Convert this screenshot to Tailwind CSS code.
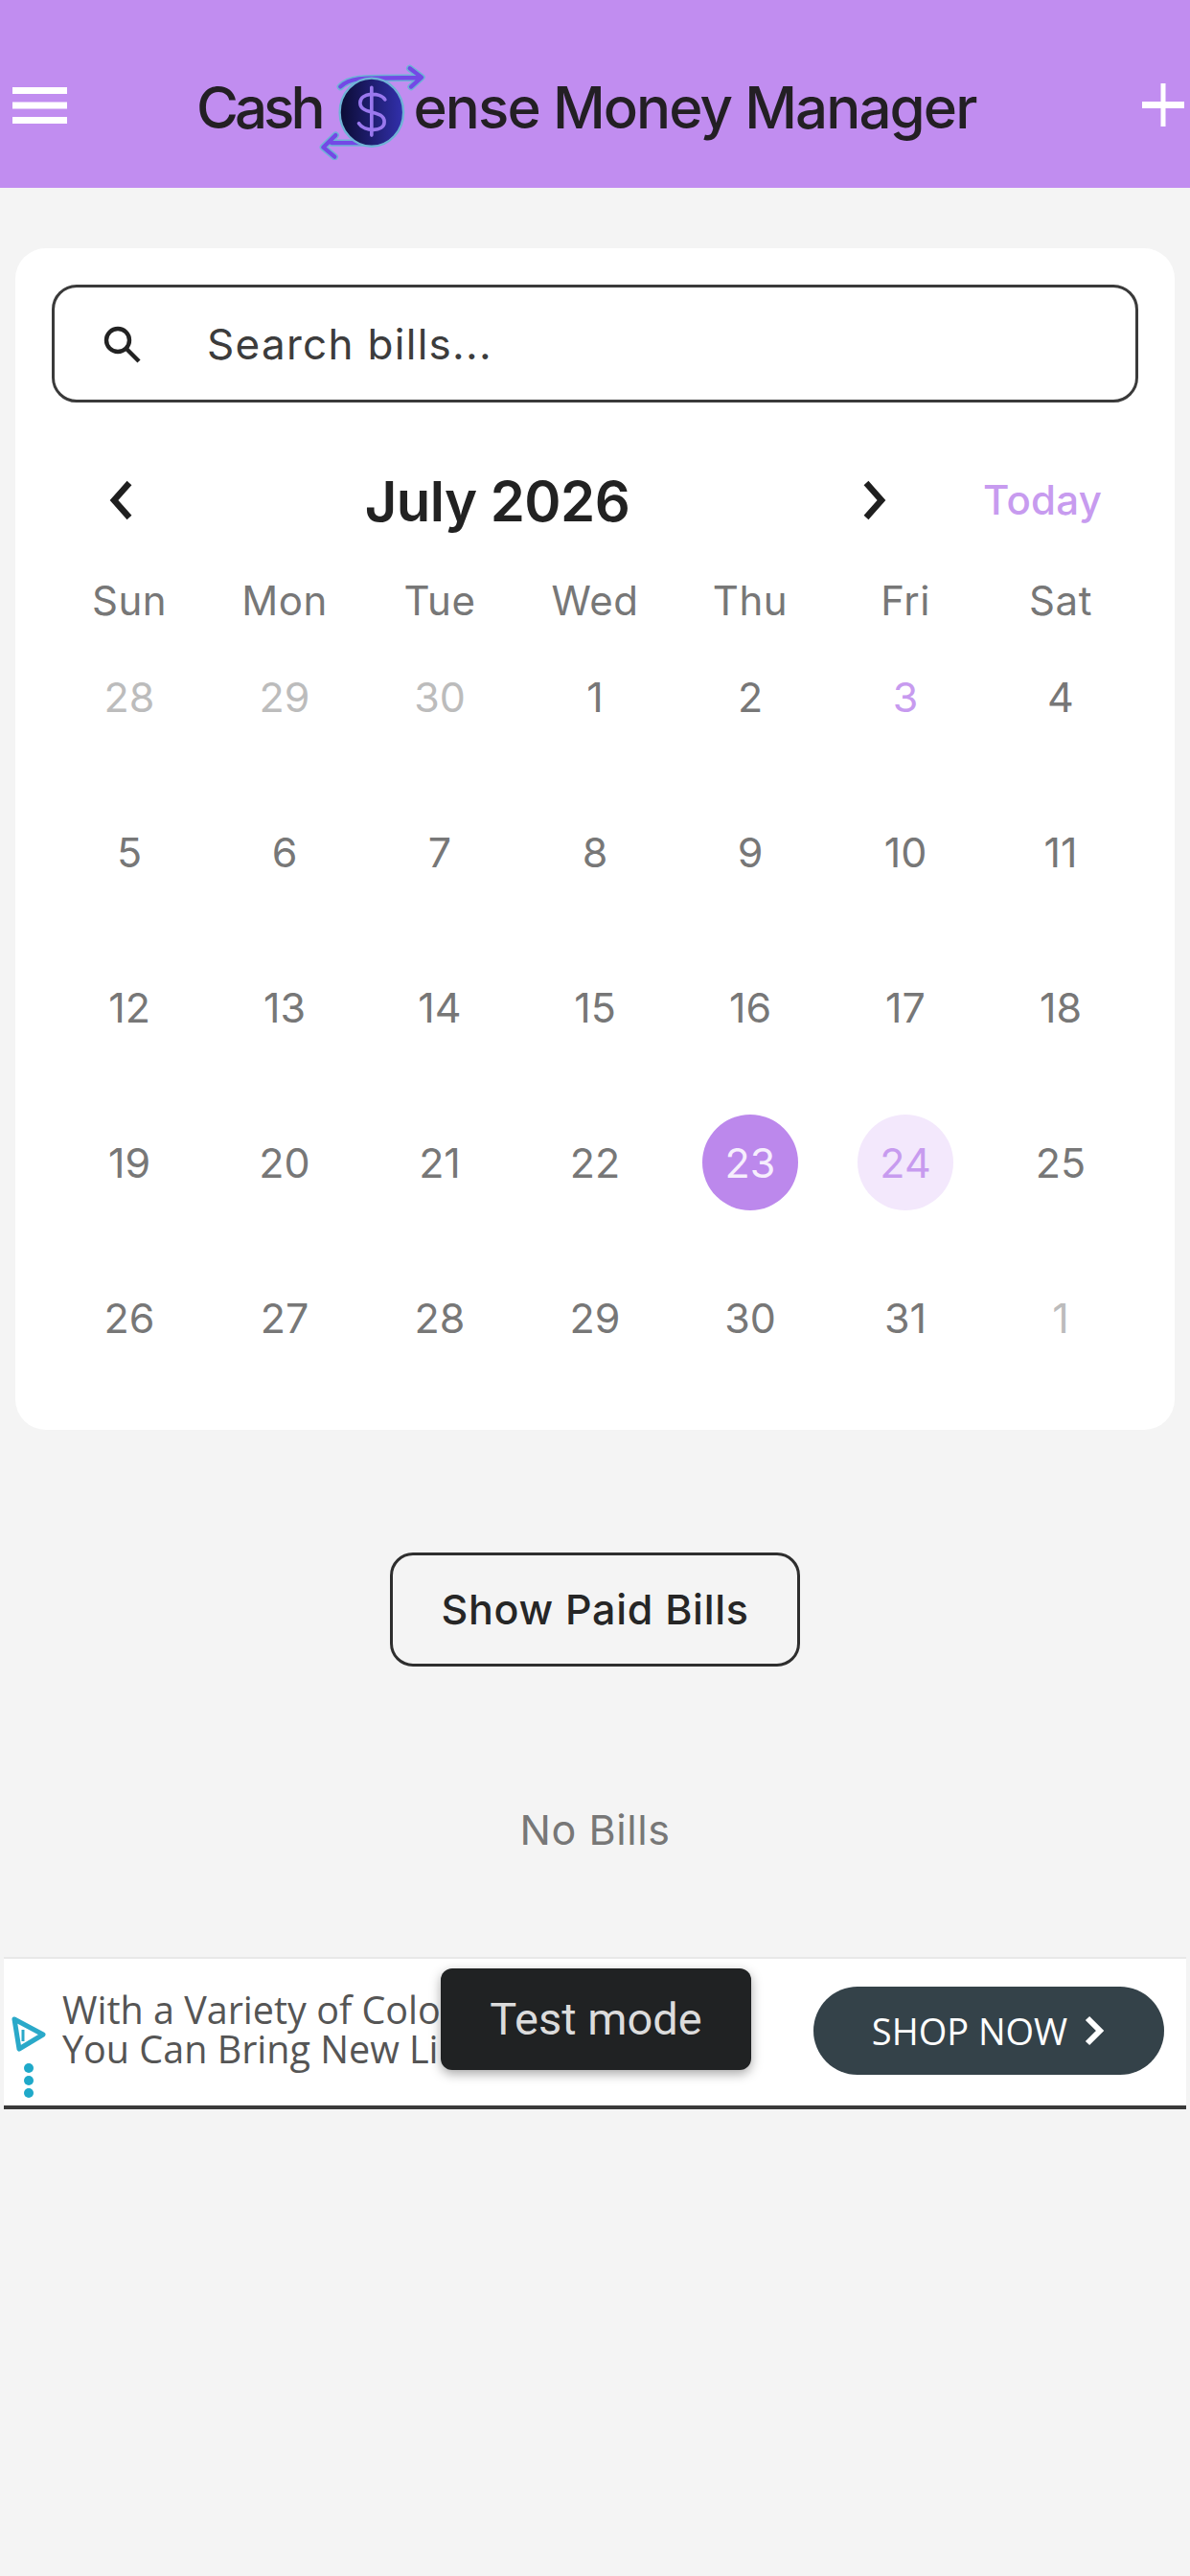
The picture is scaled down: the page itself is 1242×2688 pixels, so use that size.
<!DOCTYPE html>
<html>
<head>
<meta charset="utf-8">
<script src="https://cdn.jsdelivr.net/npm/@tailwindcss/browser@4"></script>
</head>
<body class="bg-[#f4f4f4] font-['Inter','Liberation_Sans',sans-serif]">
<div class="w-[1242px] h-[2688px] overflow-hidden flex flex-col">
  <header class="h-[196px] shrink-0 bg-[#c18df0] relative flex items-center justify-center pt-[16px]">
    <svg class="absolute left-[13px] top-[91px]" width="57" height="38" viewBox="0 0 57 38"><g fill="#fff"><rect x="0" y="0" width="57" height="7"/><rect x="0" y="15.5" width="57" height="7"/><rect x="0" y="31" width="57" height="7"/></g></svg>
    <div class="absolute left-[205px] top-[74px] flex items-center h-[76px] text-[60px] leading-[76px] font-medium text-[#231f24] tracking-[-1.9px] whitespace-nowrap">
      <span class="tracking-[-4px]">Cash</span>
      <svg class="shrink-0 ml-[-3px] mr-[-14px] translate-y-[3px]" width="113" height="103" viewBox="90 70 340 310">
        <defs><linearGradient id="g" x1="0" x2="1"><stop offset="0" stop-color="#0b0b33"/><stop offset="1" stop-color="#3230ad"/></linearGradient></defs>
        <g fill="none" stroke-linecap="round" stroke-linejoin="round">
          <path d="M160 150 C190 120 220 122 400 122 M378 92 L415 120 L382 150" stroke="#6fb2d6" stroke-width="22"/>
          <path d="M132 326 L250 326 M145 302 L106 340 L142 370" stroke="#6fb2d6" stroke-width="22"/>
          <path d="M160 150 C190 120 220 122 400 122 M378 92 L415 120 L382 150" stroke="#7448e6" stroke-width="13"/>
          <path d="M132 326 L250 326 M145 302 L106 340 L142 370" stroke="#7448e6" stroke-width="13"/>
        </g>
        <ellipse cx="258" cy="230" rx="100" ry="107" fill="url(#g)" stroke="#6fb2d6" stroke-width="7"/>
        <path d="M300 190 C285 165 222 168 222 200 C222 240 298 220 298 260 C298 292 235 292 218 265 M258 152 L258 302" stroke="#9a78ee" stroke-width="11" fill="none" stroke-linecap="round"/>
      </svg>
      <span>ense Money Manager</span>
    </div>
    <svg class="absolute left-[1192px] top-[87px]" width="44" height="45" viewBox="0 0 44 45"><g fill="#fff"><rect x="0" y="19" width="44" height="7"/><rect x="19.5" y="0" width="5" height="45"/></g></svg>
  </header>

  <section class="mt-[63px] mx-[16px] w-[1210px] h-[1233px] bg-white rounded-[32px] px-[38px] pt-[38px]">
    <div class="h-[123px] border-[3px] border-[#3a3a3a] rounded-[26px] flex items-center pl-[46px]">
      <svg width="48" height="48" viewBox="0 0 24 24" fill="none" stroke="#222" stroke-width="2.2"><circle cx="10" cy="10" r="6"/><path d="M14.5 14.5 L21 21"/></svg>
      <span class="ml-[65px] text-[44px] tracking-[1.3px] text-[#3c3c3c]">Search bills...</span>
    </div>

    <div class="relative h-[120px] mt-[66px] flex items-center">
      <svg class="absolute left-[58px] top-[15px]" width="30" height="42" viewBox="0 0 30 42" fill="none" stroke="#1f1f1f" stroke-width="6.5"><path d="M23 3 L7 21 L23 39"/></svg>
      <div class="absolute left-[195px] w-[540px] top-[0px] text-center text-[58px] leading-[74px] font-semibold tracking-[-0.5px] text-[#222]">July 2026</div>
      <svg class="absolute left-[843px] top-[15px]" width="30" height="42" viewBox="0 0 30 42" fill="none" stroke="#1f1f1f" stroke-width="6.5"><path d="M7 3 L23 21 L7 39"/></svg>
      <span class="absolute left-[972px] top-[11px] text-[42px] tracking-[0.3px] leading-[50px] font-medium text-[#c79bef]">Today</span>
    </div>

    <div class="grid grid-cols-7 w-[1134px] -mt-[9px] text-[42px] text-[#777] text-center tracking-[0.5px]">
      <div class="h-[60px] leading-[60px]">Sun</div><div class="h-[60px] leading-[60px]">Mon</div><div class="h-[60px] leading-[60px]">Tue</div><div class="h-[60px] leading-[60px]">Wed</div><div class="h-[60px] leading-[60px]">Thu</div><div class="h-[60px] leading-[60px]">Fri</div><div class="h-[60px] leading-[60px]">Sat</div>
    </div>

    <div class="grid grid-cols-7 auto-rows-[162px] w-[1134px] -mt-[11px] text-[43px] text-[#777]">
      <div class="flex items-center justify-center text-[#bcbcbc]">28</div><div class="flex items-center justify-center text-[#bcbcbc]">29</div><div class="flex items-center justify-center text-[#bcbcbc]">30</div><div class="flex items-center justify-center">1</div><div class="flex items-center justify-center">2</div><div class="flex items-center justify-center text-[#c79bef]">3</div><div class="flex items-center justify-center">4</div>
      <div class="flex items-center justify-center">5</div><div class="flex items-center justify-center">6</div><div class="flex items-center justify-center">7</div><div class="flex items-center justify-center">8</div><div class="flex items-center justify-center">9</div><div class="flex items-center justify-center">10</div><div class="flex items-center justify-center">11</div>
      <div class="flex items-center justify-center">12</div><div class="flex items-center justify-center">13</div><div class="flex items-center justify-center">14</div><div class="flex items-center justify-center">15</div><div class="flex items-center justify-center">16</div><div class="flex items-center justify-center">17</div><div class="flex items-center justify-center">18</div>
      <div class="flex items-center justify-center">19</div><div class="flex items-center justify-center">20</div><div class="flex items-center justify-center">21</div><div class="flex items-center justify-center">22</div>
      <div class="flex items-center justify-center"><span class="w-[100px] h-[100px] rounded-full bg-[#bc88ec] text-[#f6eefd] flex items-center justify-center">23</span></div>
      <div class="flex items-center justify-center"><span class="w-[100px] h-[100px] rounded-full bg-[#f3e8fc] text-[#c79bef] flex items-center justify-center">24</span></div>
      <div class="flex items-center justify-center">25</div>
      <div class="flex items-center justify-center">26</div><div class="flex items-center justify-center">27</div><div class="flex items-center justify-center">28</div><div class="flex items-center justify-center">29</div><div class="flex items-center justify-center">30</div><div class="flex items-center justify-center">31</div><div class="flex items-center justify-center text-[#bcbcbc]">1</div>
    </div>
  </section>

  <div class="mt-[128px] flex justify-center">
    <div class="w-[428px] h-[119px] border-[3px] border-[#2e2e2e] rounded-[24px] flex items-center justify-center text-[43px] font-medium tracking-[0.7px] text-[#262626]">Show Paid Bills</div>
  </div>

  <div class="mt-[140px] h-[60px] leading-[60px] text-center text-[43px] tracking-[0.6px] text-[#777]">No Bills</div>

  <div class="relative mt-[103px] mx-[4px] w-[1234px] h-[159px] bg-white border-t-[2px] border-[#e8e8e8] border-b-[4px] border-b-[#3a3a3a] flex items-center font-['Open_Sans','Noto_Sans',sans-serif]">
    <div class="w-[61px] shrink-0 pl-[7px] flex flex-col items-start gap-[11px] pt-[52px]">
      <svg width="38" height="38" viewBox="0 0 38 38" fill="none" stroke="#2aa9c9" stroke-width="5" stroke-linejoin="round"><path d="M4 3 L34 19 L9 34 Z"/><path d="M13 14 L13 26" stroke-width="3"/></svg>
      <div class="flex flex-col gap-[3px] ml-[14px]"><span class="block w-[10px] h-[10px] rounded-full bg-[#1fa9c9]"></span><span class="block w-[10px] h-[10px] rounded-full bg-[#1fa9c9]"></span><span class="block w-[10px] h-[10px] rounded-full bg-[#1fa9c9]"></span></div>
    </div>
    <div class="text-[39.5px] leading-[41px] text-[#555] whitespace-nowrap -mt-[6px]">With a Variety of Colo<br>You Can Bring New Li</div>
    <div class="absolute right-[23px] top-[29px] w-[366px] h-[92px] rounded-full bg-[#344249] text-white flex items-center justify-center gap-[16px] text-[38px] font-normal">
      <span>SHOP NOW</span>
      <svg width="24" height="34" viewBox="0 0 24 34" fill="none" stroke="#fff" stroke-width="6"><path d="M5 4 L18 17 L5 30"/></svg>
    </div>
    <div class="absolute left-[456px] top-[10px] w-[324px] h-[106px] rounded-[12px] bg-[#202223] shadow-[0_4px_12px_rgba(0,0,0,0.35)] flex items-center justify-center text-[47px] text-[#dcdcdc] font-['Roboto',sans-serif]">Test mode</div>
  </div>
</div>
</body>
</html>
